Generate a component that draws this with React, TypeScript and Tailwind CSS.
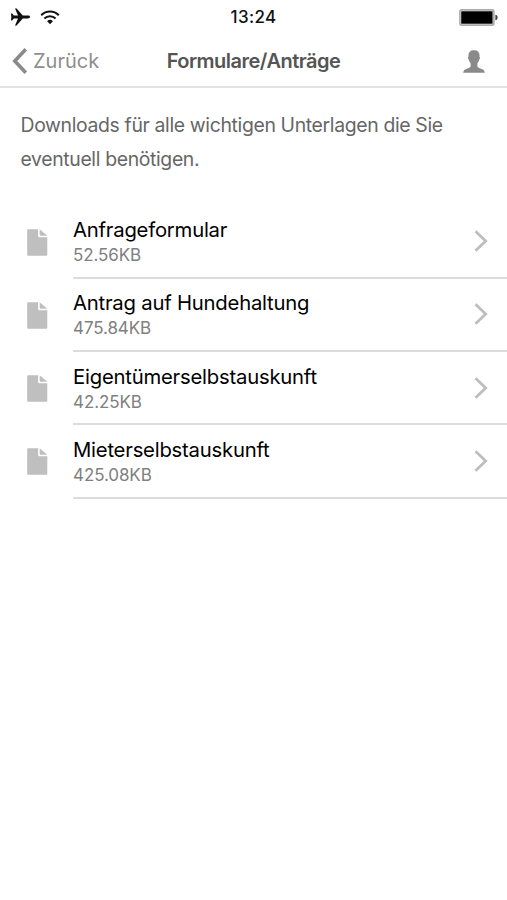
const documents = [
  { title: "Anfrageformular", size: "52.56KB" },
  { title: "Antrag auf Hundehaltung", size: "475.84KB" },
  { title: "Eigentümerselbstauskunft", size: "42.25KB" },
  { title: "Mieterselbstauskunft", size: "425.08KB" },
];

const PlaneIcon = () => (
  <svg width="20" height="18" viewBox="0 0 20 18" fill="#111">
    <path d="M20 9c0 .9-.9 1.400-2.200 1.400H12.800L6.600 17.500H5L8 10.400H3.800L2.200 12.500H1L1.300 9 1 5.500h1.200l1.600 2.100H8L5 .5h1.600l6.200 7.100h5C19.100 7.600 20 8.100 20 9z" />
  </svg>
);

const WifiIcon = () => (
  <svg width="20" height="15" viewBox="0 0 20 15" fill="none" stroke="#111" strokeWidth="2">
    <path d="M1.200 5.200a12.400 12.400 0 0 1 17.600 0" />
    <path d="M4.400 8.500a7.900 7.900 0 0 1 11.200 0" />
    <path d="M10 14.200 7.100 11.300a4.100 4.100 0 0 1 5.800 0z" fill="#111" stroke="none" />
  </svg>
);

const BatteryIcon = () => (
  <svg width="40" height="17" viewBox="0 0 40 17">
    <rect x="0.900" y="0.900" width="34" height="15.200" rx="1.800" fill="#fff" stroke="#aaa" strokeWidth="1.600" />
    <rect x="2.200" y="2.300" width="31.400" height="12.400" rx="0.500" fill="#000" />
    <path d="M36.400 5.700c1.600.3 2.200 1.300 2.200 2.800s-.6 2.500-2.200 2.800z" fill="#444" />
  </svg>
);

const BackIcon = () => (
  <svg width="16" height="28" viewBox="0 0 16 28" fill="none" stroke="#8a8a8a" strokeWidth="3.600">
    <path d="M13.800 2.200 2.800 14l11 11.800" />
  </svg>
);

const PersonIcon = () => (
  <svg width="22" height="23" viewBox="0 0 22 23" fill="#8a8a8a">
    <path d="M11 .3c3.700 0 5.500 2 5.500 5.200 0 .5 0 1 .1 1.400.7.3.6 1.800-.3 2.500-.3 1.500-.9 2.800-1.900 3.900v2.700c0 1.200.9 1.700 2.400 2.200 3.100 1 4.700 1.600 5 4.500H.2c.3-2.900 1.900-3.500 5-4.500 1.500-.5 2.400-1 2.400-2.200v-2.700c-1-1.100-1.600-2.400-1.900-3.900-.9-.7-1-2.200-.3-2.500.1-.4.1-.9.1-1.400C5.500 2.300 7.300.3 11 .3z" />
  </svg>
);

const FileIcon = () => (
  <svg width="21" height="27" viewBox="0 0 21 27" fill="#bfbfbf">
    <path d="M1.600.2H11.100v6.500c0 .9.600 1.500 1.500 1.500h7.700v17.200c0 .9-.5 1.400-1.400 1.400H1.600c-.9 0-1.400-.5-1.400-1.400V1.600C.2.700.7.200 1.600.2z" />
    <path d="M12.700.2l7.600 6.600h-6.600c-.6 0-1-.4-1-1z" />
  </svg>
);

const ArrowIcon = () => (
  <svg width="14" height="22" viewBox="0 0 14 22" fill="none" stroke="#bdbdbd" strokeWidth="2.700">
    <path d="M1.500 1.300 11.700 11 1.500 20.700" />
  </svg>
);

const App = () => {
  return (
    <div className="w-full min-h-screen bg-white font-['Inter',sans-serif]">
      <div className="h-[34px] grid grid-cols-3 items-center px-2.5 text-[#111]">
        <div className="flex items-center gap-2.5">
          <PlaneIcon />
          <WifiIcon />
        </div>
        <div className="pt-0.5 text-center text-[17px] font-medium tracking-[0.3px]">13:24</div>
        <div className="flex justify-end -mr-0.5">
          <BatteryIcon />
        </div>
      </div>

      <div className="h-[54px] grid grid-cols-[1fr_auto_1fr] items-center px-3 pt-0.5 border-b-2 border-[#e2e2e2]">
        <div className="flex items-center gap-[5px] text-[20px] text-[#8e8e8e]">
          <BackIcon />
          <span>Zurück</span>
        </div>
        <div className="text-[20px] font-semibold tracking-[-0.5px] text-[#555]">Formulare/Anträge</div>
        <div className="flex justify-end pr-2.5">
          <PersonIcon />
        </div>
      </div>

      <div className="pt-5 pl-[20.5px] pr-5 text-[19.4px] leading-[34px] tracking-[-0.35px] text-[#666]">
        Downloads für alle wichtigen Unterlagen die Sie eventuell benötigen.
      </div>

      <div className="mt-[29.4px] flex flex-col">
        {documents.map((doc) => (
          <div key={doc.title} className="h-[73.3px] flex items-center pl-[27px]">
            <FileIcon />
            <div className="ml-[25px] h-full grow flex items-center justify-between pr-[19px] border-b-2 border-[#dcdcdc]">
              <div className="pt-px">
                <div className="text-[20.3px] leading-[27px] tracking-[-0.22px] text-black">{doc.title}</div>
                <div className="text-[17px] leading-6 tracking-[-0.1px] text-[#808080]">{doc.size}</div>
              </div>
              <ArrowIcon />
            </div>
          </div>
        ))}
      </div>
    </div>
  );
};

export default App;
